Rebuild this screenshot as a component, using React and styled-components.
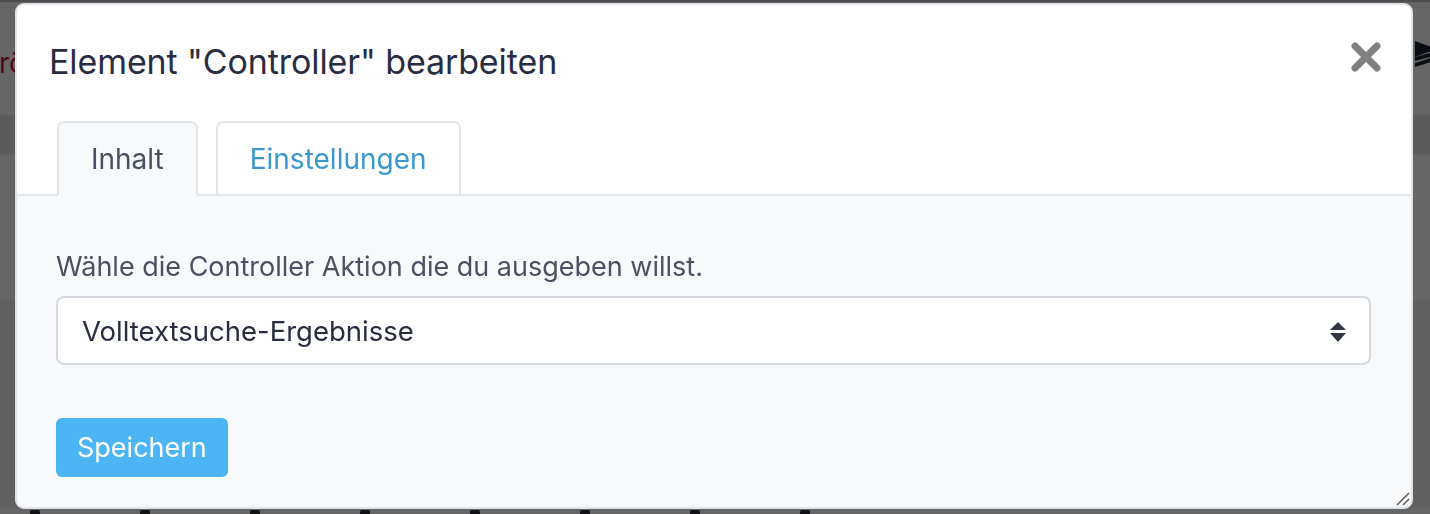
import styled, { createGlobalStyle } from "styled-components";

const GlobalStyle = createGlobalStyle`
  html, body {
    margin: 0;
    padding: 0;
    height: 100%;
    overflow: hidden;
    font-family: Inter, "Noto Sans", "Liberation Sans", sans-serif;
  }
  * { box-sizing: border-box; }
`;

const rows = [
  { h: 3, bg: "#bdbdbd" },
  { h: 112, bg: "#ffffff", first: true },
  { h: 40, bg: "#e4e4e4" },
  { h: 145, bg: "#ffffff" },
  { h: 208, bg: "#eff0f2" },
  { h: 40, bg: "#ffffff", icons: true },
];

const App = () => {
  return (
    <>
      <GlobalStyle />
      <Page>
        {rows.map((row, i) => (
          <PageRow key={i} $h={row.h} $bg={row.bg}>
            {row.first && (
              <>
                <RedText>Größe</RedText>
                <LayersIcon width="22" height="26" viewBox="0 0 22 26">
                  <path d="M0 0 L22 8 L0 16 Z" fill="#1d2233" />
                  <path d="M0 16 L22 10 L22 14 L0 20 Z" fill="#1d2233" />
                  <path d="M0 22 L22 15 L22 19 L0 26 Z" fill="#1d2233" />
                </LayersIcon>
              </>
            )}
            {row.icons && (
              <IconRow>
                {Array.from({ length: 8 }).map((_, j) => (
                  <IconBlock key={j} />
                ))}
              </IconRow>
            )}
          </PageRow>
        ))}
      </Page>
      <Overlay />

      <Modal>
        <Header>
          <TitleRow>
            <Title>Element "Controller" bearbeiten</Title>
            <CloseButton aria-label="Schließen">
              <svg width="30" height="30" viewBox="0 0 30 30">
                <path
                  d="M4 4 L26 26 M26 4 L4 26"
                  stroke="#808080"
                  strokeWidth="7"
                  strokeLinecap="round"
                />
              </svg>
            </CloseButton>
          </TitleRow>
          <Tabs>
            <Tab $active>Inhalt</Tab>
            <Tab>Einstellungen</Tab>
          </Tabs>
        </Header>

        <Body>
          <Label>Wähle die Controller Aktion die du ausgeben willst.</Label>
          <SelectWrap>
            <Select defaultValue="search">
              <option value="search">Volltextsuche-Ergebnisse</option>
            </Select>
            <SelectArrows width="16" height="20" viewBox="0 0 16 20">
              <path d="M8 0 L16 8 L0 8 Z" fill="#323843" />
              <path d="M0 11 L16 11 L8 20 Z" fill="#323843" />
            </SelectArrows>
          </SelectWrap>
          <SaveButton>Speichern</SaveButton>
        </Body>

        <Grip width="14" height="14" viewBox="0 0 14 14">
          <path d="M1 13 L13 1 M7 13 L13 7" stroke="#5a5a5a" strokeWidth="1.5" />
        </Grip>
      </Modal>
    </>
  );
};

export default App;

/* ---------------- background page ---------------- */

const Page = styled.div`
  display: flex;
  flex-direction: column;
  width: 1430px;
  height: 514px;
  overflow: hidden;
`;

const PageRow = styled.div`
  flex: 0 0 ${(p) => p.$h}px;
  background: ${(p) => p.$bg};
  display: flex;
  align-items: center;
  justify-content: space-between;
  border-bottom: 1px solid #f4f4f4;
`;

const RedText = styled.span`
  margin-left: -22px;
  margin-top: 8px;
  color: #c8193b;
  font-size: 28px;
`;

const LayersIcon = styled.svg`
  margin-right: -7px;
  margin-top: -10px;
`;

const IconRow = styled.div`
  display: flex;
  gap: 100px;
  padding-left: 30px;
  align-self: flex-start;
  padding-top: 2px;
`;

const IconBlock = styled.div`
  width: 10px;
  height: 8px;
  background: #2a2d38;
  border-radius: 2px;
`;

const Overlay = styled.div`
  position: fixed;
  inset: 0;
  background: rgba(0, 0, 0, 0.6);
`;

/* ---------------- modal ---------------- */

const Modal = styled.div`
  position: fixed;
  left: 15px;
  top: 3px;
  width: 1398px;
  height: 506px;
  display: flex;
  flex-direction: column;
  background: #f8f9fb;
  border: 2px solid #dfe3ea;
  border-radius: 9px;
  overflow: hidden;
`;

const Header = styled.div`
  background: #ffffff;
  padding: 33px 30px 0 32px;
  border-bottom: 2px solid #e2e6ec;
  display: flex;
  flex-direction: column;
`;

const TitleRow = styled.div`
  display: flex;
  align-items: flex-start;
  justify-content: space-between;
`;

const Title = styled.h2`
  margin: 0;
  font-size: 34px;
  font-weight: 400;
  line-height: 48px;
  color: #282d42;
  letter-spacing: -0.1px;
`;

const CloseButton = styled.button`
  border: none;
  background: none;
  padding: 0;
  margin-top: 4px;
  width: 30px;
  height: 30px;
  display: flex;
  cursor: pointer;
`;

const Tabs = styled.div`
  display: flex;
  gap: 18px;
  margin-top: 35px;
  padding-left: 8px;
  margin-bottom: -2px;
`;

const Tab = styled.div`
  height: 75px;
  padding: 0 32px;
  display: flex;
  align-items: center;
  font-size: 28px;
  color: ${(p) => (p.$active ? "#475063" : "#3a98cf")};
  background: ${(p) => (p.$active ? "#f8f9fb" : "#ffffff")};
  border: 2px solid #e2e6ec;
  border-bottom-color: ${(p) => (p.$active ? "#f8f9fb" : "#e2e6ec")};
  border-radius: 7px 7px 0 0;
  cursor: pointer;
`;

const Body = styled.div`
  flex: 1;
  padding: 55px 40px 0 39px;
  display: flex;
  flex-direction: column;
  align-items: flex-start;
`;

const Label = styled.label`
  font-size: 27px;
  line-height: 32px;
  color: #4a5161;
`;

const SelectWrap = styled.div`
  position: relative;
  width: 100%;
  margin-top: 13px;
`;

const Select = styled.select`
  appearance: none;
  width: 100%;
  height: 69px;
  padding: 0 60px 0 24px;
  font-family: inherit;
  font-size: 27.5px;
  color: #282d42;
  background: #ffffff;
  border: 2px solid #d3d7de;
  border-radius: 8px;
  outline: none;
`;

const SelectArrows = styled.svg`
  position: absolute;
  right: 25px;
  top: 26px;
  pointer-events: none;
`;

const SaveButton = styled.button`
  margin-top: 53px;
  height: 59px;
  padding: 0 21px;
  font-family: inherit;
  font-size: 27px;
  color: #ffffff;
  background: #4bb5f6;
  border: none;
  border-radius: 6px;
  cursor: pointer;
`;

const Grip = styled.svg`
  position: absolute;
  right: 1px;
  bottom: 1px;
`;
